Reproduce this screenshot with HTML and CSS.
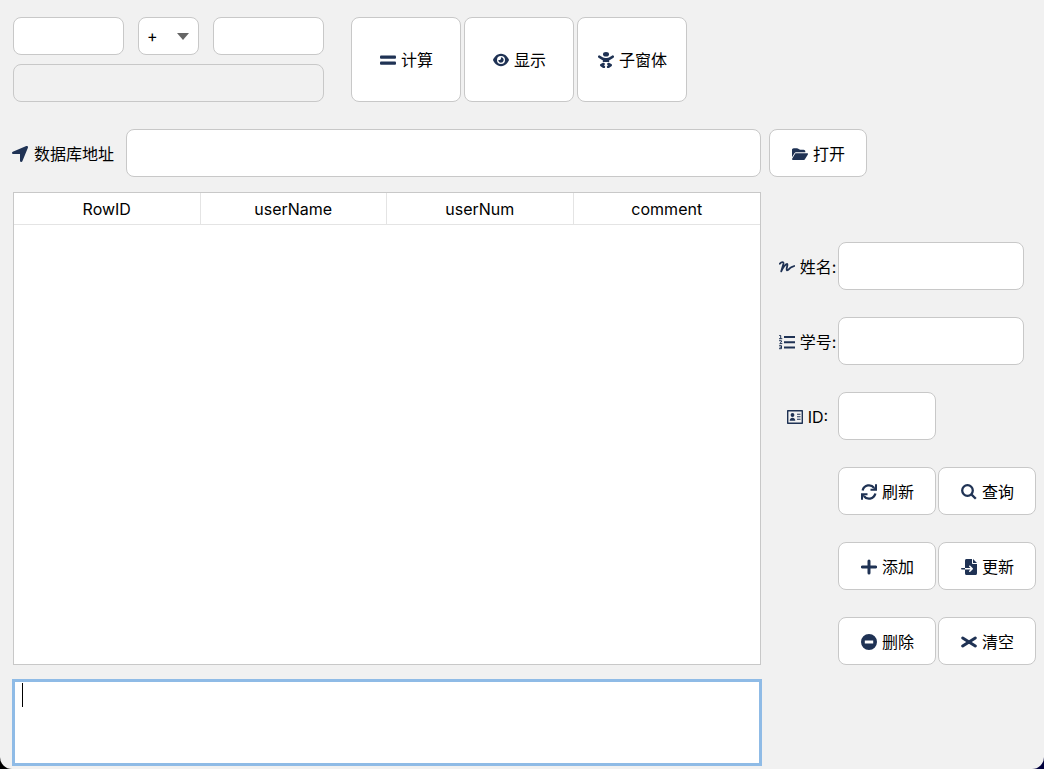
FILE: index.html
```html
<!DOCTYPE html>
<html lang="zh-CN">
<head>
<meta charset="utf-8">
<meta name="viewport" content="width=device-width, initial-scale=1">
<title>数据库</title>
<link rel="stylesheet" href="styles.css">
</head>
<body>
<main class="window">
  <section class="top">
    <div class="calc">
      <input class="field" type="text" aria-label="数值一">
      <div class="operator">
        <select class="field operator-select" aria-label="运算符"><option>+</option></select>
        <svg class="operator-arrow" viewBox="0 0 12 7" aria-hidden="true"><path d="M0 0H12L6 7Z"/></svg>
      </div>
      <input class="field" type="text" aria-label="数值二">
      <input class="field result" type="text" aria-label="结果" readonly>
    </div>
    <div class="actions">
      <button class="button" type="button">
        <svg class="icon" viewBox="0 0 16 16" aria-hidden="true"><rect y="3.5" width="16" height="3.2" rx="1"/><rect y="9.5" width="16" height="3.2" rx="1"/></svg>
        <span>计算</span>
      </button>
      <button class="button" type="button">
        <svg class="icon" viewBox="0 -32 576 576" aria-hidden="true"><path d="M288 32c-80.800 0-145.500 36.800-192.600 80.600C48.600 156 17.300 208 2.500 243.700c-3.300 7.900-3.300 16.700 0 24.600C17.300 304 48.600 356 95.400 399.400C142.500 443.200 207.200 480 288 480s145.500-36.800 192.600-80.600c46.800-43.500 78.100-95.400 93-131.100c3.300-7.900 3.300-16.700 0-24.600c-14.900-35.700-46.200-87.700-93-131.100C433.500 68.800 368.800 32 288 32zM144 256a144 144 0 1 1 288 0 144 144 0 1 1 -288 0zm144-64c0 35.300-28.700 64-64 64c-7.100 0-13.900-1.200-20.300-3.300c-5.500-1.800-11.900 1.600-11.700 7.400c.3 6.900 1.300 13.800 3.200 20.700c13.700 51.200 66.400 81.600 117.600 67.900s81.600-66.400 67.900-117.600c-11.100-41.500-47.800-69.400-88.600-71.100c-5.800-.2-9.200 6.100-7.400 11.700c2.100 6.400 3.300 13.200 3.300 20.300z"/></svg>
        <span>显示</span>
      </button>
      <button class="button" type="button">
        <svg class="icon" viewBox="0 0 16 16" aria-hidden="true"><ellipse cx="8" cy="2.300" rx="3" ry="2.300"/><path d="M4.800 6H11.200V10H4.800Z"/><path class="limb" d="M1.300 4.700C5.500 8.200 10.500 8.200 14.700 4.700M5.600 12L3.300 13.200L5.800 14.900M10.400 12L12.700 13.200L10.200 14.900"/></svg>
        <span>子窗体</span>
      </button>
    </div>
  </section>

  <section class="source">
    <label class="label" for="db-path">
      <svg class="icon" viewBox="16 48 416 416" aria-hidden="true"><path d="M429.600 92.100c4.900-11.900 2.100-25.600-7-34.700s-22.800-11.900-34.700-7l-352 144c-14.200 5.800-22.200 20.800-19.300 35.800s16.100 25.800 31.400 25.800H224V432c0 15.300 10.800 28.400 25.800 31.400s30-5.100 35.800-19.300l144-352z"/></svg>
      <span>数据库地址</span>
    </label>
    <input class="field" id="db-path" type="text">
    <button class="button" type="button">
      <svg class="icon" viewBox="0 0 576 512" preserveAspectRatio="none" aria-hidden="true"><path d="M88.700 223.800L0 375.800V96C0 60.700 28.700 32 64 32H181.500c17 0 33.300 6.700 45.300 18.700l26.500 26.500c12 12 28.300 18.700 45.300 18.700H416c35.300 0 64 28.700 64 64v32H144c-22.800 0-43.800 12.100-55.300 31.800zm27.600 16.100C122.100 230 132.600 224 144 224H544c11.500 0 22 6.100 27.700 16.100s5.700 22.200-.1 32.100l-112 192C453.900 474 443.400 480 432 480H32c-11.500 0-22-6.100-27.700-16.100s-5.700-22.200 .1-32.100l112-192z" transform="translate(0 42) scale(1 .84)"/></svg>
      <span>打开</span>
    </button>
  </section>

  <section class="workspace">
    <div class="data">
      <div class="grid-view">
        <table class="table">
          <thead><tr><th>RowID</th><th>userName</th><th>userNum</th><th>comment</th></tr></thead>
          <tbody></tbody>
        </table>
      </div>
      <div class="log">
        <textarea class="log-text" aria-label="日志"></textarea>
        <span class="cursor"></span>
      </div>
    </div>

    <form class="editor">
      <label class="label" for="name">
        <svg class="icon" viewBox="0 0 16 16" aria-hidden="true"><path class="pen" d="M.9 4.700C2.500 2.800 4.900 2.400 4.400 5L2.200 12.400C3.500 9 6.500 5 8 5C9.500 5.200 6.500 10.800 8 11.300C9.400 11.500 11 8.600 12 8.300L15.300 7"/></svg>
        <span>姓名:</span>
      </label>
      <input class="field wide" id="name" type="text">

      <label class="label" for="number">
        <svg class="icon" viewBox="0 0 16 16" aria-hidden="true"><path d="M5 2H16V4H5ZM5 7.200H16V9.200H5ZM5 12.400H16V14.400H5Z"/><path class="hairline" d="M.6 1.500H1.700V4.500M.4 4.700H2.900M.5 6.700H2.400V8L.7 9.600H2.900M.5 11.700H2.500V14.700H.4M1 13.200H2.500"/></svg>
        <span>学号:</span>
      </label>
      <input class="field wide" id="number" type="text">

      <label class="label" for="id">
        <svg class="icon" viewBox="0 0 16 16" aria-hidden="true"><path class="outline" d="M.7 1.700H15.300V14.300H.7Z"/><circle cx="5.500" cy="6" r="1.900"/><path d="M2.700 11.800C2.700 7.800 8.300 7.800 8.300 11.800ZM10 4.700H13.500V5.800H10ZM10 7.200H13.500V8.300H10ZM10 9.700H13.500V10.800H10Z"/></svg>
        <span>ID:</span>
      </label>
      <input class="field" id="id" type="text">

      <button class="button first" type="button">
        <svg class="icon" viewBox="0 0 16 16" aria-hidden="true"><path class="turn" d="M1.600 6.500C3.200 .6 10 -.2 13.200 4M14.400 9.500C12.800 15.400 6 16.200 2.800 12"/><path d="M16 .3V6.800H9.500V4.800H12.500L14 3.400V.3ZM0 15.700V9.200H6.500V11.200H3.500L2 12.600V15.700Z"/></svg>
        <span>刷新</span>
      </button>
      <button class="button" type="button">
        <svg class="icon" viewBox="0 0 16 16" aria-hidden="true"><circle class="turn" cx="6.500" cy="6.500" r="5.300"/><path class="turn" d="M10.600 10.600L14.800 14.800"/></svg>
        <span>查询</span>
      </button>

      <button class="button first" type="button">
        <svg class="icon" viewBox="0 0 16 16" aria-hidden="true"><path class="heavy" d="M8 2V14M1.400 8H14.600"/></svg>
        <span>添加</span>
      </button>
      <button class="button" type="button">
        <svg class="icon" viewBox="0 0 512 512" aria-hidden="true"><path d="M128 64c0-35.300 10-64 40-64H352V128c0 17.700 14.300 32 32 32H512V448c0 35.300-10 64-40 64H168c-30 0-40-28.700-40-64V336H302l-39 39c-9.400 9.400-9.400 24.600 0 33.900s24.600 9.400 33.900 0l80-80c9.400-9.400 9.400-24.600 0-33.900l-80-80c-9.400-9.400-24.600-9.400-33.900 0s-9.400 24.600 0 33.900l39 39H128V64zm0 224v48H24c-13.300 0-24-10.700-24-24s10.700-24 24-24H128zM512 128H384V0L512 128z"/></svg>
        <span>更新</span>
      </button>

      <button class="button first" type="button">
        <svg class="icon" viewBox="0 0 16 16" aria-hidden="true"><path fill-rule="evenodd" d="M8 0A8 8 0 1 0 8 16A8 8 0 1 0 8 0ZM3.800 6.500H12.200V9.500H3.800Z"/></svg>
        <span>删除</span>
      </button>
      <button class="button" type="reset">
        <svg class="icon" viewBox="0 0 16 16" aria-hidden="true"><path class="heavy" d="M1.700 4L14.300 12M14.300 4L1.700 12"/></svg>
        <span>清空</span>
      </button>
    </form>
  </section>
</main>
</body>
</html>
```

FILE: styles.css
```css
* {
  box-sizing: border-box;
}

html {
  background: linear-gradient(90deg, #000000 50%, #00003c 50%);
}

body {
  margin: 0;
  color: #000000;
  font: 16px/24px Inter, "Noto Sans CJK SC", sans-serif;
}

.window {
  display: flex;
  flex-direction: column;
  min-height: 100vh;
  padding: 17px 8px 3px 12px;
  background: #f1f1f1;
  border-radius: 0 0 12px 12px;
}

.field,
.button {
  min-width: 0;
  border: 1px solid #c8c8c8;
  border-radius: 8px;
  background: #ffffff;
  color: inherit;
  font: inherit;
}

.field {
  width: 100%;
  height: 48px;
  padding: 0 8px;
}

.button {
  display: flex;
  align-items: center;
  justify-content: center;
  gap: 5px;
  height: 48px;
  padding: 1px 0 0 1px;
}

.label {
  display: flex;
  align-items: center;
  gap: 5px;
  padding-top: 1px;
  white-space: nowrap;
}

.icon {
  flex: none;
  width: 16px;
  height: 16px;
  fill: #1f3254;
}

.limb,
.turn,
.pen,
.heavy,
.outline,
.hairline {
  fill: none;
  stroke: #1f3254;
  stroke-linecap: round;
  stroke-linejoin: round;
}

.limb {
  stroke-width: 2.6;
}

.turn {
  stroke-width: 2.3;
  stroke-linecap: butt;
}

.pen {
  stroke-width: 1.8;
}

.heavy {
  stroke-width: 3;
}

.outline {
  stroke-width: 1.4;
}

.hairline {
  stroke-width: 1;
}

.top {
  display: flex;
  gap: 27px;
  padding-left: 1px;
}

.calc {
  display: grid;
  grid-template-columns: 111px 61px 111px;
  gap: 9px 14px;
}

.calc .field {
  height: 38px;
}

.calc .result {
  grid-column: 1 / -1;
  background: #f1f1f1;
}

.operator {
  position: relative;
}

.operator-select {
  appearance: none;
}

.operator-arrow {
  position: absolute;
  top: 16px;
  right: 10px;
  width: 12px;
  height: 7px;
  fill: #666666;
  pointer-events: none;
}

.actions {
  display: grid;
  grid-template-columns: repeat(3, 110px);
  gap: 3px;
}

.actions .button {
  height: 100%;
}

.source {
  display: grid;
  grid-template-columns: 106px 1fr 98px;
  align-items: center;
  column-gap: 8px;
  margin-top: 27px;
  padding-right: 169px;
}

.source .label {
  gap: 6px;
}

.workspace {
  display: grid;
  flex: 1;
  grid-template-columns: 1fr 257px;
  gap: 17px;
  margin-top: 15px;
}

.data {
  display: flex;
  flex-direction: column;
  gap: 14px;
}

.grid-view {
  flex: 1;
  margin: 0 1px;
  border: 1px solid #c8c8c8;
  background: #ffffff;
}

.table {
  width: 100%;
  border-collapse: separate;
  border-spacing: 0;
  table-layout: fixed;
}

.table th {
  height: 32px;
  padding: 0;
  border-right: 1px solid #e4e4e4;
  border-bottom: 1px solid #e4e4e4;
  font-weight: 400;
}

.table th:last-child {
  border-right: 0;
}

.log {
  position: relative;
  display: flex;
}

.log-text {
  width: 100%;
  height: 87px;
  padding: 2px 8px;
  border: 3px solid #8fbbe6;
  outline: 0;
  resize: none;
  font: inherit;
}

.cursor {
  position: absolute;
  top: 4px;
  left: 10px;
  width: 1px;
  height: 24px;
  background: #000000;
}

.editor {
  display: grid;
  grid-template-columns: 57px 98px 98px;
  align-content: start;
  gap: 27px 2px;
  padding-top: 50px;
}

.editor .label {
  justify-content: center;
}

.wide {
  grid-column: 2 / -1;
  width: 186px;
}

.first {
  grid-column: 2;
}
```
